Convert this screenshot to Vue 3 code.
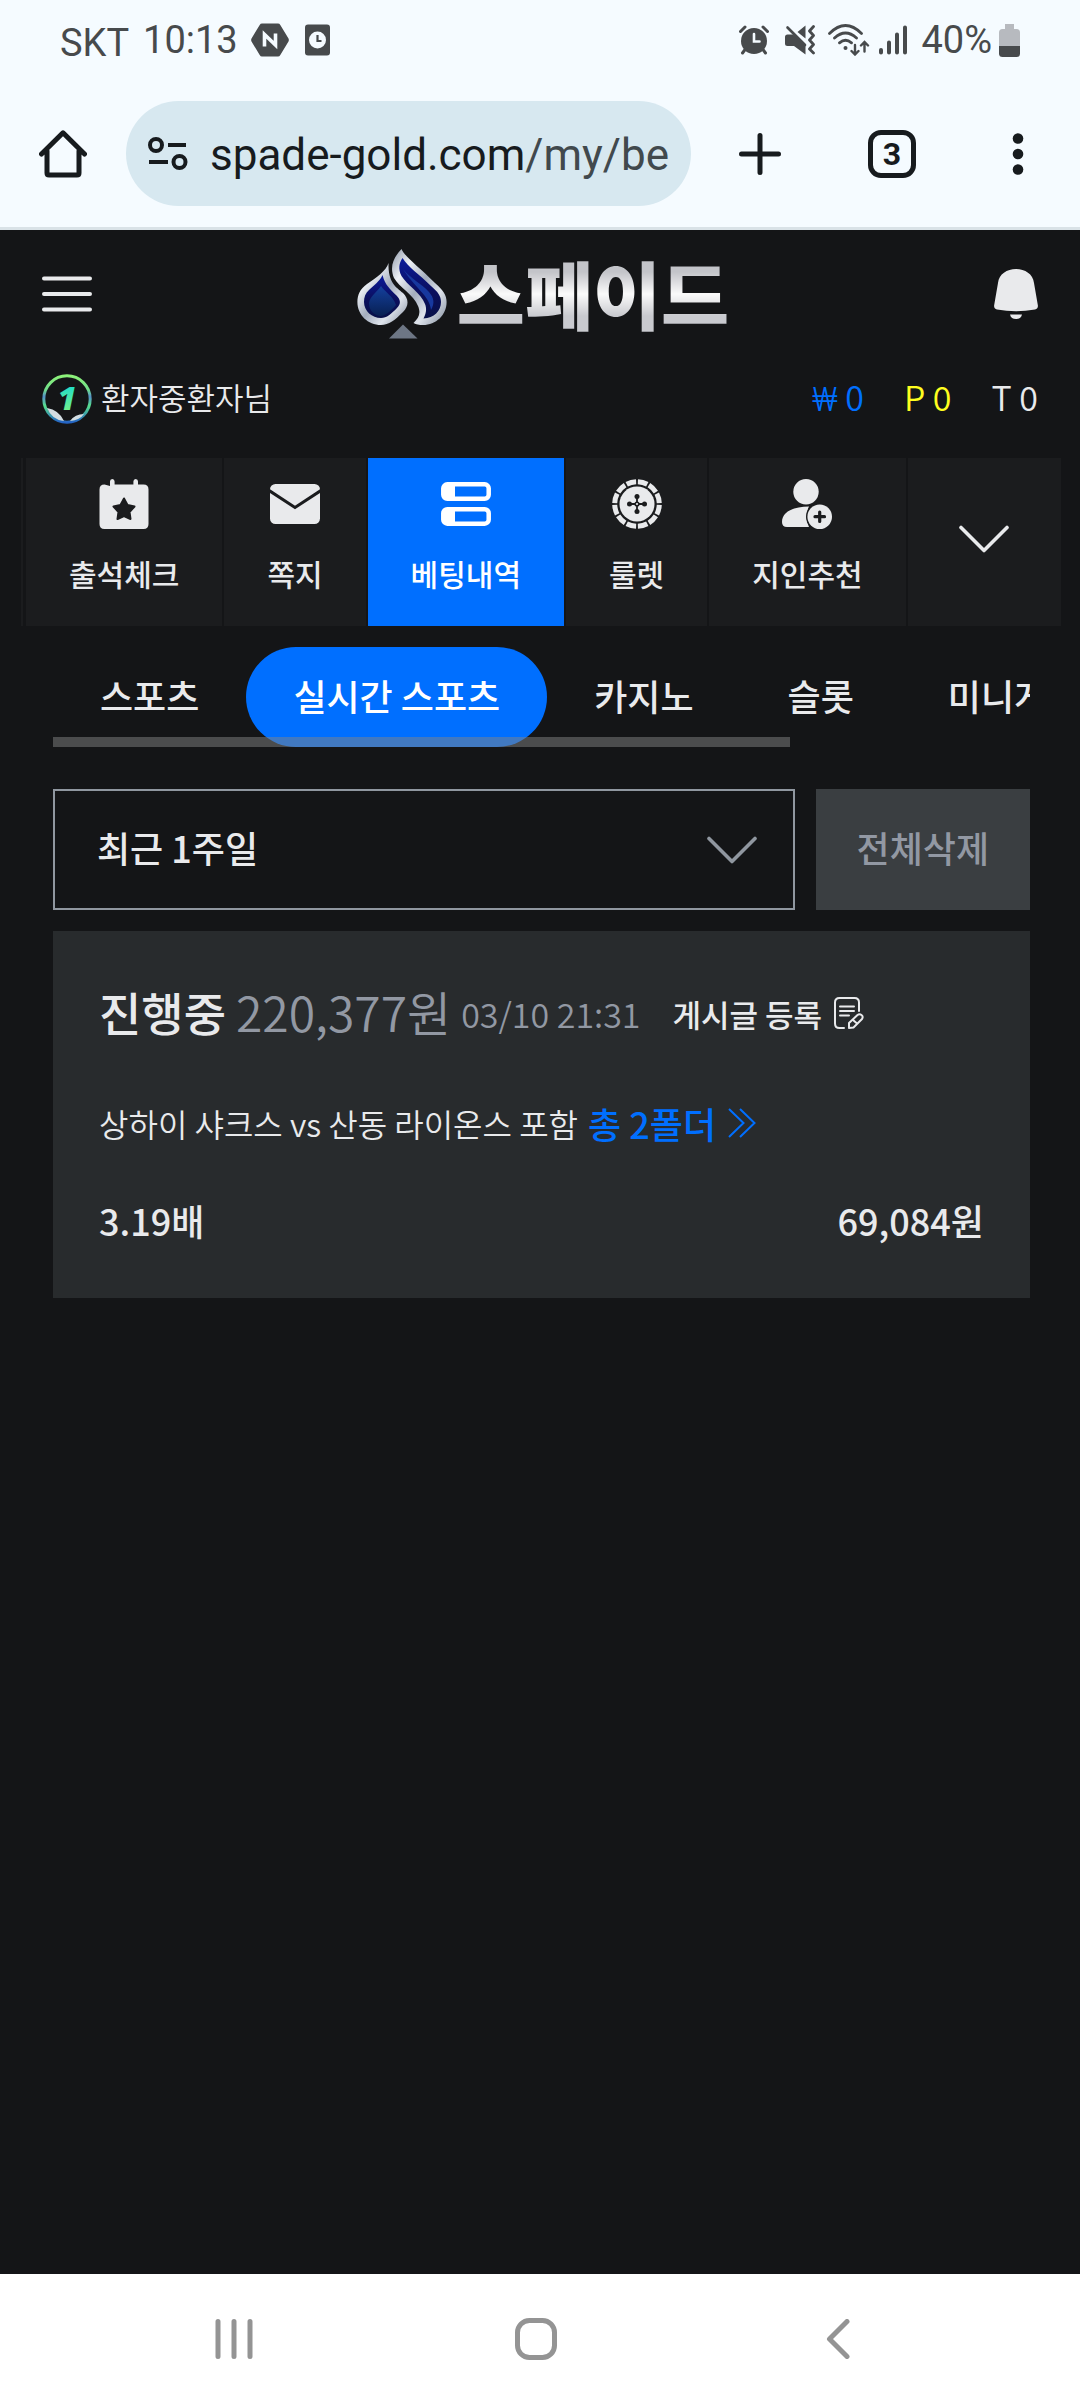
<script setup>
import { ref } from 'vue'

const period = ref('최근 1주일')
const menu = [
  { id: 'attendance', label: '출석체크' },
  { id: 'message', label: '쪽지' },
  { id: 'bets', label: '베팅내역', active: true },
  { id: 'roulette', label: '룰렛' },
  { id: 'invite', label: '지인추천' },
]
const tabs = ['스포츠', '실시간 스포츠', '카지노', '슬롯', '미니게임']
const activeTab = ref('실시간 스포츠')
</script>

<template>
  <div class="screen">
    <div class="status">
      <div class="status-side">
        <span class="carrier">SKT</span>
        <span class="time">10:13</span>
        <svg class="hex" width="38" height="34" viewBox="0 0 38 34">
          <path d="M11 .5h16q1.500 0 2.300 1.400L37.500 15.500q.7 1.500 0 3L29.300 32q-.8 1.500-2.300 1.500H11q-1.500 0-2.300-1.500L.5 18.500q-.7-1.500 0-3L8.700 1.900Q9.500.5 11 .5z" fill="#474a4c" />
          <path d="M13.500 23.500V11.500L24.500 22V10.500" fill="none" stroke="#f5fbff" stroke-width="3.600" />
        </svg>
        <svg class="note" width="25" height="32" viewBox="0 0 25 32">
          <rect width="25" height="31" y=".5" rx="3" fill="#474a4c" />
          <circle cx="12.500" cy="16" r="8.500" fill="#f5fbff" />
          <path d="M12.500 11v6h4" fill="none" stroke="#474a4c" stroke-width="2.200" />
        </svg>
      </div>
      <div class="status-side">
        <svg width="30" height="30" viewBox="0 0 30 30" fill="none" stroke="#474a4c" stroke-linecap="round">
          <circle cx="15" cy="16" r="13" fill="#474a4c" stroke="none" />
          <path d="M1.500 6.500l4.500-4.500M28.500 6.500L24 2M3.500 28l3-4M26.500 28l-3-4" stroke-width="3" />
          <path d="M15 9v7.500h5.500" stroke="#f5fbff" stroke-width="2.600" />
        </svg>
        <svg class="mute" width="31" height="30" viewBox="0 0 31 30">
          <path d="M0 12q0-2.500 2.500-2.500H8L20.500 20v9.500L9 21H2.500Q0 21 0 18.500zM12.500 7L20.500 .5v13z" fill="#474a4c" />
          <path d="M2.500 2.500L20 20" stroke="#474a4c" stroke-width="2.600" stroke-linecap="round" />
          <path d="M28.500 1.500l-4 4.500 4 4.500-4 4.500 4 4.500-4 4.500 4 4" fill="none" stroke="#474a4c" stroke-width="2.800" stroke-linecap="round" stroke-linejoin="round" />
        </svg>
        <svg class="wifi" width="42" height="32" viewBox="0 0 42 32" fill="none" stroke="#474a4c" stroke-width="2.800" stroke-linecap="round">
          <path d="M1.500 9.500Q17.500-6.500 33.500 9.500M6.500 14q11-10 22 0M11.500 18.800q6-5 12 0" />
          <circle cx="17.500" cy="24" r="2" fill="#474a4c" stroke="none" />
          <path d="M27 21v9M23.500 27l3.500 3.500 3.500-3.500M36.500 27.500v-9M33 21.500l3.500-3.500 3.500 3.500" stroke-width="2.400" />
        </svg>
        <svg class="signal" width="28" height="30" viewBox="0 0 28 30" stroke="#474a4c" stroke-width="4" stroke-linecap="round">
          <path d="M2 25v2.500M10 17.500v10M18 9.500v18M26 2.500v25" />
        </svg>
        <span class="percent">40%</span>
        <svg class="battery" width="21" height="33" viewBox="0 0 21 33">
          <path d="M6 0h9v5h2.500Q21 5 21 8.500V22H0V8.500Q0 5 3.500 5H6z" fill="#b7babf" />
          <path d="M0 22h21v7.500q0 3.500-3.500 3.500h-14Q0 33 0 29.500z" fill="#474a4c" />
        </svg>
      </div>
    </div>

    <div class="toolbar">
      <button class="plain home" type="button" aria-label="홈">
        <svg width="48" height="48" viewBox="0 0 48 48" fill="none" stroke="#171b1e" stroke-width="5" stroke-linejoin="round" stroke-linecap="round">
          <path d="M2.500 24L24 2.800 45.500 24M8 21v22q0 2 2 2h28q2 0 2-2V21" />
        </svg>
      </button>
      <div class="address">
        <svg width="40" height="34" viewBox="0 0 40 34" fill="none" stroke="#171b1e" stroke-width="4">
          <circle cx="8" cy="8" r="6" />
          <path d="M20 8h18M1 25h19" />
          <circle cx="31.500" cy="25" r="6" />
        </svg>
        <a class="url" href="#">spade-gold.com<span>/my/be</span></a>
      </div>
      <button class="plain plus" type="button" aria-label="새 탭">
        <svg width="42" height="42" viewBox="0 0 42 42" stroke="#171b1e" stroke-width="5" stroke-linecap="round">
          <path d="M21 2.500v37M2.500 21h37" />
        </svg>
      </button>
      <button class="tab-count" type="button">3</button>
      <button class="plain more" type="button" aria-label="메뉴">
        <svg width="12" height="42" viewBox="0 0 12 42" fill="#171b1e">
          <circle cx="6" cy="5.500" r="5.300" /><circle cx="6" cy="21" r="5.300" /><circle cx="6" cy="36.500" r="5.300" />
        </svg>
      </button>
    </div>

    <header class="header">
      <button class="plain" type="button" aria-label="전체 메뉴">
        <svg width="50" height="36" viewBox="0 0 50 36" stroke="#e9eaec" stroke-width="4" stroke-linecap="round">
          <path d="M2 2.500h46M2 18h46M2 33.500h46" />
        </svg>
      </button>
      <a class="logo" href="#">
        <svg width="90" height="90" viewBox="0 0 90 90">
          <defs>
            <linearGradient id="silver" x1="0" y1="0" x2="1" y2="1">
              <stop offset="0" stop-color="#8d97a8" /><stop offset=".25" stop-color="#eef1f6" />
              <stop offset=".5" stop-color="#a3adbd" /><stop offset=".72" stop-color="#dfe4ec" /><stop offset="1" stop-color="#7f8a9b" />
            </linearGradient>
            <linearGradient id="deep" x1="0" y1="0" x2="0" y2="1">
              <stop offset="0" stop-color="#0a1a9c" /><stop offset=".55" stop-color="#0b0f5e" /><stop offset="1" stop-color="#071048" />
            </linearGradient>
            <linearGradient id="glow" x1="0" y1="0" x2="0" y2="1">
              <stop offset="0" stop-color="#14409e" /><stop offset="1" stop-color="#082052" />
            </linearGradient>
          </defs>
          <path d="M31.500 14C29 22 20 28 10 35C3 40 .4 46 .4 53C.4 66 11 76 24 76C32 76 38 71 46 63C52 57 52 50 46 44C39 38 31 34 31.500 14z" fill="url(#silver)" />
          <path d="M25.500 26C23 32 17 36 12 41C8.500 44 7 48 7 53C7 62 15 69 24 69C30 69 34 65 40 59C44 55 44 51 39.500 46.500C33 40 28 36 25.500 26z" fill="url(#deep)" />
          <path d="M24 37C20 43 13 47 12 54C12 62 18 67 24 67C29 66 34 62 39 56C36 47 28 43 24 37z" fill="url(#glow)" />
          <path d="M44.500 0C48 8 60 16 78 34C86 41 89.600 46 89.600 53C89.600 66 79 76 66 76C62 76 59 75.500 56.500 74C62 69 64 64 61 57C57 46 42 38 37 29C32.500 18 36 9 44.500 0z" fill="url(#silver)" />
          <path d="M45.500 9C51 18 62 25 74 37C81 43 84 47 84 53C84 62 77 69 66.500 69.500C69 65 70 60 68 55C64 44 50 36 44.500 27C41 20 42 14 45.500 9z" fill="url(#deep)" />
          <path d="M46 20C54 30 64 34 72 43C77 49 78 54 74 61C73 47 56 37 46 20z" fill="#17389e" />
          <path d="M46 75.500L60.500 89.500H32z" fill="#6d7685" />
        </svg>
        <span class="wordmark">스페이드</span>
      </a>
      <button class="plain" type="button" aria-label="알림">
        <svg width="44" height="50" viewBox="0 0 44 50" fill="#e9eaec">
          <path d="M22 0C31 0 39 5 40 14L43.800 36Q44.500 39.500 41 40.500Q22 44 3 40.500Q-.5 39.500.2 36L4 14C5 5 13 0 22 0z" />
          <path d="M16 45.500h12q-1 4.500-6 4.500t-6-4.500z" />
        </svg>
      </button>
    </header>

    <div class="user">
      <div class="user-name">
        <svg width="50" height="50" viewBox="0 0 50 50">
          <defs>
            <linearGradient id="ring" x1=".5" y1="0" x2=".5" y2="1">
              <stop offset="0" stop-color="#8df279" /><stop offset=".3" stop-color="#6fdc8a" /><stop offset=".45" stop-color="#5591c8" />
              <stop offset=".65" stop-color="#57df8c" /><stop offset="1" stop-color="#2463c4" />
            </linearGradient>
            <linearGradient id="digit" x1="0" y1="0" x2="0" y2="1">
              <stop offset="0" stop-color="#00d5e0" /><stop offset="1" stop-color="#8df77b" />
            </linearGradient>
          </defs>
          <circle cx="25" cy="25" r="23.200" fill="none" stroke="url(#ring)" stroke-width="3" />
          <path d="M5 34Q17 36 22 47Q10 46 5 34zM42 40Q33 40 28 47Q38 46 42 40z" fill="#d3dde2" />
          <text x="25" y="36" text-anchor="middle" class="badge-digit" fill="url(#digit)">1</text>
        </svg>
        <span>환자중환자님</span>
      </div>
      <div class="balances">
        <span class="won"><span class="won-sign">₩</span> 0</span>
        <span class="point">P 0</span>
        <span>T 0</span>
      </div>
    </div>

    <nav class="menu">
      <span class="menu-edge"></span>
      <a v-for="item in menu" :key="item.id" href="#" class="menu-item" :class="{ active: item.active }">
        <svg v-if="item.id === 'attendance'" width="50" height="50" viewBox="0 0 50 50">
          <path d="M11 7V2.500q0-2.500 2.300-2.500T15.600 2.500V5.500H34.400V2.500q0-2.500 2.300-2.500T39 2.500V5.500h5.500q5 0 5 5V45q0 5-5 5H5.500q-5 0-5-5V10.500q0-5 5-5z" fill="#e9eaec" />
          <path d="M25 19.500l3.500 6.500 7 1.500-5 5.500 1 7-6.500-3-6.500 3 1-7-5-5.500 7-1.500z" fill="#1b1c1e" stroke="#1b1c1e" stroke-width="2" stroke-linejoin="round" />
        </svg>
        <svg v-else-if="item.id === 'message'" width="50" height="50" viewBox="0 0 50 50">
          <rect y="5" width="50" height="40" rx="5.500" fill="#e9eaec" />
          <path d="M-1 11.500L25 28.500 51 11.500" fill="none" stroke="#1b1c1e" stroke-width="3" />
        </svg>
        <svg v-else-if="item.id === 'bets'" width="50" height="50" viewBox="0 0 50 50" fill="none" stroke="#fff" stroke-width="4.500">
          <rect x="2.300" y="5.300" width="45.400" height="14.500" rx="4" />
          <rect x="2.300" y="30.200" width="45.400" height="14.500" rx="4" />
          <path d="M4 7h10v11H4zM4 32h10v11H4z" fill="#fff" stroke="none" />
        </svg>
        <svg v-else-if="item.id === 'roulette'" width="50" height="50" viewBox="0 0 50 50">
          <circle cx="25" cy="25" r="22.300" pathLength="120" fill="none" stroke="#e9eaec" stroke-width="5" stroke-dasharray="8.400 1.600" stroke-dashoffset="-.8" />
          <circle cx="25" cy="25" r="17.500" fill="#e9eaec" />
          <path d="M25 17v16M17 25h16" stroke="#1b1c1e" stroke-width="1.800" />
          <g fill="#1b1c1e"><circle cx="25" cy="17.500" r="2.500" /><circle cx="25" cy="32.500" r="2.500" /><circle cx="17.500" cy="25" r="2.500" /><circle cx="32.500" cy="25" r="2.500" /><circle cx="25" cy="25" r="2.600" /></g>
          <circle cx="25" cy="25" r="1.100" fill="#e9eaec" />
        </svg>
        <svg v-else width="50" height="50" viewBox="0 0 50 50">
          <circle cx="24" cy="12.700" r="12.700" fill="#e9eaec" />
          <path d="M5 48q-5 0-5-5c0-10 11-15.500 27-15.500q-5 10 0 20.500z" fill="#e9eaec" />
          <circle cx="37.700" cy="37.700" r="13.700" fill="#1b1c1e" />
          <circle cx="37.700" cy="37.700" r="12.300" fill="#e9eaec" />
          <path d="M37.700 33v9.500M33 37.700h9.500" stroke="#1b1c1e" stroke-width="3.200" stroke-linecap="round" />
        </svg>
        <span>{{ item.label }}</span>
      </a>
      <button class="expand" type="button" aria-label="펼치기">
        <svg width="50" height="28" viewBox="0 0 50 28" fill="none" stroke="#e9eaec" stroke-width="3.600" stroke-linecap="round" stroke-linejoin="round">
          <path d="M2 2.500L25 25.500 48 2.500" />
        </svg>
      </button>
    </nav>

    <main class="content">
      <div class="tabs">
        <div class="tab-list">
          <button v-for="tab in tabs" :key="tab" type="button" class="tab" :class="{ active: tab === activeTab }" @click="activeTab = tab">{{ tab }}</button>
        </div>
        <div class="scrollbar"></div>
      </div>

      <div class="filter">
        <div class="period">
          <select v-model="period" aria-label="조회 기간">
            <option>최근 1주일</option>
            <option>최근 1개월</option>
          </select>
          <svg width="50" height="28" viewBox="0 0 50 28" fill="none" stroke="#9097a0" stroke-width="3.600" stroke-linecap="round" stroke-linejoin="round">
            <path d="M2 2.500L25 25.500 48 2.500" />
          </svg>
        </div>
        <button class="delete" type="button">전체삭제</button>
      </div>

      <article class="card">
        <div class="card-head">
          <strong>진행중</strong>
          <span class="payout">220,377원</span>
          <time>03/10 21:31</time>
          <button class="plain post" type="button">
            게시글 등록
            <svg width="30" height="32" viewBox="0 0 30 32" fill="none" stroke="#e9eaec" stroke-width="2" stroke-linecap="round" stroke-linejoin="round">
              <path d="M25 14V5.500Q25 1 20.500 1h-15Q1 1 1 5.500v21Q1 31 5.500 31H10M6 9.500h14M6 14h14M6 18.500h9" />
              <path d="M15 31v-5l8.500-8q2-1.500 4 0t.5 4L19.500 30.500zM19 23l4 3.500" />
            </svg>
          </button>
        </div>
        <div class="match">
          <span>상하이 샤크스 vs 산동 라이온스 포함</span>
          <a href="#">총 2폴더
            <svg width="28" height="30" viewBox="0 0 28 30" fill="none" stroke="#006fff" stroke-width="2">
              <path d="M1 1l14.500 14L1 29M12 1l14.500 14L12 29" />
            </svg>
          </a>
        </div>
        <div class="totals">
          <span>3.19배</span>
          <span>69,084원</span>
        </div>
      </article>
    </main>

    <div class="system-nav">
      <button class="plain" type="button" aria-label="최근 앱">
        <svg width="38" height="40" viewBox="0 0 38 40" stroke="#949494" stroke-width="5" stroke-linecap="round"><path d="M3 2.500v35M19 2.500v35M35 2.500v35" /></svg>
      </button>
      <button class="plain" type="button" aria-label="홈 화면">
        <svg width="42" height="42" viewBox="0 0 42 42" fill="none" stroke="#949494" stroke-width="5"><rect x="2.500" y="2.500" width="37" height="37" rx="12" /></svg>
      </button>
      <button class="plain" type="button" aria-label="뒤로">
        <svg width="24" height="40" viewBox="0 0 24 40" fill="none" stroke="#949494" stroke-width="5" stroke-linecap="round" stroke-linejoin="round"><path d="M21 2.500L3.500 20 21 37.500" /></svg>
      </button>
    </div>
  </div>
</template>

<style>
body {
  margin: 0;
  background: #141517;
}
</style>

<style scoped>
* {
  box-sizing: border-box;
}
.screen {
  display: flex;
  flex-direction: column;
  min-height: 100vh;
  background: #141517;
  color: #e9eaec;
  font-family: "Noto Sans CJK KR", sans-serif;
}
svg {
  display: block;
  flex: none;
}
a {
  color: inherit;
  text-decoration: none;
}
button,
select {
  font: inherit;
  color: inherit;
  border: 0;
  padding: 0;
  margin: 0;
  border-radius: 0;
  cursor: pointer;
}
.plain {
  background: none;
}
.status {
  display: flex;
  justify-content: space-between;
  height: 80px;
  padding: 0 60px;
  background: #f5fbff;
  color: #474a4c;
  font: 38px/76px Roboto, sans-serif;
}
.status-side {
  display: flex;
  align-items: center;
}
.carrier {
  padding-top: 6px;
}
.time {
  margin-left: 14px;
}
.hex {
  margin-left: 13px;
}
.note,
.mute {
  margin-left: 16px;
}
.wifi {
  margin-left: 12px;
}
.signal {
  margin-left: 9px;
}
.percent {
  margin-left: 14px;
}
.battery {
  margin-left: 7px;
}
.toolbar {
  display: flex;
  align-items: center;
  height: 150px;
  padding: 0 56px 0 39px;
  border-bottom: 3px solid #d9e2e7;
  background: #f5fbff;
  color: #171b1e;
}
.address {
  display: flex;
  flex: 1;
  align-items: center;
  gap: 22px;
  min-width: 0;
  height: 105px;
  margin-left: 39px;
  padding: 0 20px 0 22px;
  border-radius: 53px;
  background: #d7e8f0;
}
.url {
  overflow: hidden;
  padding-top: 2px;
  white-space: nowrap;
  font: 44px/60px Roboto, sans-serif;
}
.url span {
  color: #41494d;
}
.plus {
  margin-left: 48px;
}
.tab-count {
  width: 48px;
  height: 48px;
  margin-left: 87px;
  border: 5px solid #171b1e;
  border-radius: 13px;
  background: none;
  font: bold 32px/38px Roboto, sans-serif;
}
.more {
  margin-left: 96px;
}
.header {
  display: flex;
  align-items: center;
  justify-content: space-between;
  height: 128px;
  padding: 0 42px;
}
.logo {
  display: flex;
  align-items: center;
  gap: 10px;
}
.wordmark {
  padding-bottom: 4px;
  background: linear-gradient(#c3c4c9 25%, #fafafa 50%, #c9cacf 75%);
  background-clip: text;
  color: transparent;
  font-size: 74px;
  font-weight: 900;
  line-height: 84px;
}
.user {
  display: flex;
  align-items: center;
  justify-content: space-between;
  height: 82px;
  padding: 0 42px;
  font-size: 31px;
  font-weight: 350;
}
.user-name {
  display: flex;
  align-items: center;
  gap: 9px;
}
.user-name span,
.balances {
  padding-bottom: 6px;
}
.badge-digit {
  font: italic 800 32px "Open Sans", sans-serif;
}
.balances {
  display: flex;
  gap: 40px;
  font-size: 34px;
}
.won {
  color: #006fff;
}
.won-sign {
  font-family: Roboto, sans-serif;
  font-weight: 300;
}
.point {
  color: #fffd1f;
}
.menu {
  display: flex;
  gap: 2px;
  height: 168px;
  margin: 18px 19px 0 21px;
  font-size: 30px;
  font-weight: 500;
}
.menu-edge {
  width: 3px;
  border-right: 1px solid #141517;
  background: #1b1c1e;
}
.menu-item {
  display: flex;
  flex-direction: column;
  align-items: center;
  gap: 22px;
  padding: 21px 43px 0;
  background: #1b1c1e;
  line-height: 44px;
  white-space: nowrap;
}
.menu-item.active {
  background: #006fff;
  color: #fff;
}
.expand {
  display: flex;
  flex: 1;
  align-items: center;
  justify-content: center;
  padding-bottom: 6px;
  background: #1b1c1e;
}
.content {
  flex: 1;
  padding: 21px 50px 0 53px;
  font-size: 36px;
  font-weight: 500;
}
.tabs {
  position: relative;
}
.tab-list {
  display: flex;
  overflow: hidden;
}
.tab {
  flex: none;
  height: 100px;
  padding: 0 47px 4px;
  border-radius: 50px;
  background: none;
}
.tab.active {
  background: #006fff;
  color: #fff;
}
.scrollbar {
  position: absolute;
  left: 0;
  right: 240px;
  bottom: 0;
  height: 10px;
  background: rgba(130, 132, 131, 0.5);
}
.filter {
  display: flex;
  gap: 21px;
  height: 121px;
  margin-top: 42px;
}
.period {
  display: grid;
  flex: 1;
  align-items: center;
}
.period > * {
  grid-area: 1 / 1;
}
.period select {
  appearance: none;
  width: 100%;
  height: 121px;
  padding: 0 42px 6px;
  border: 2px solid #9097a0;
  background: none;
}
.period svg {
  justify-self: end;
  margin-right: 38px;
  pointer-events: none;
}
.delete {
  padding: 0 41px 6px;
  background: #3a3e41;
  color: #9298a3;
}
.card {
  margin-top: 21px;
  padding: 46px 46px 53px;
  background: #282b2d;
}
.card-head {
  display: flex;
  align-items: center;
  height: 72px;
  white-space: nowrap;
}
.card-head strong {
  padding-bottom: 4px;
  font-size: 46px;
  font-weight: 500;
}
.payout {
  margin-left: 10px;
  padding-bottom: 4px;
  color: #9298a3;
  font-size: 48px;
  font-weight: 350;
}
time {
  margin-left: 10px;
  color: #9298a3;
  font-size: 34px;
  font-weight: 350;
}
.post {
  display: flex;
  align-items: center;
  gap: 12px;
  margin-left: 32px;
  font-size: 31px;
}
.match {
  display: flex;
  align-items: center;
  gap: 10px;
  height: 62px;
  margin-top: 44px;
  padding-bottom: 2px;
  white-space: nowrap;
}
.match span {
  font-size: 32px;
  font-weight: 350;
}
.match a {
  display: flex;
  align-items: center;
  gap: 12px;
  color: #006fff;
}
.totals {
  display: flex;
  align-items: center;
  justify-content: space-between;
  height: 46px;
  margin-top: 44px;
  padding-bottom: 5px;
}
.system-nav {
  display: grid;
  grid-template-columns: repeat(3, 1fr);
  height: 126px;
  padding: 3px 91px 0 83px;
  background: #fff;
}
.system-nav button {
  display: grid;
  place-items: center;
}
</style>
